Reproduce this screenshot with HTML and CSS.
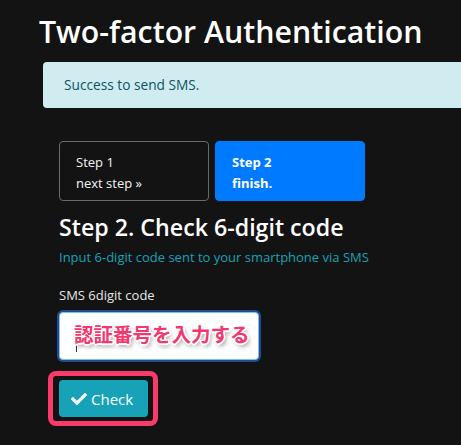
FILE: index.html
```html
<!DOCTYPE html>
<html lang="ja">
<head>
<meta charset="utf-8">
<title>Two-factor Authentication</title>
<link rel="stylesheet" href="styles.css">
</head>
<body>
<div class="page">
  <h1 class="title">Two-factor Authentication</h1>
  <div class="alert">Success to send SMS.</div>
  <div class="content">
    <div class="steps">
      <div class="step">
        <div>Step 1</div>
        <div>next step &raquo;</div>
      </div>
      <div class="step step-active">
        <div>Step 2</div>
        <div>finish.</div>
      </div>
    </div>
    <h2 class="heading">Step 2. Check 6-digit code</h2>
    <p class="hint">Input 6-digit code sent to your smartphone via SMS</p>
    <label class="label" for="code">SMS 6digit code</label>
    <div class="field">
      <input id="code" class="input" type="text">
      <span class="caret"></span>
      <span class="note">認証番号を入力する</span>
    </div>
    <div class="highlight">
      <button class="btn" type="button">
        <svg class="check" viewBox="0 0 512 512" width="16" height="16" aria-hidden="true"><path fill="#fff" d="M173.9 439.4l-166.4-166.4c-10-10-10-26.2 0-36.2l36.2-36.2c10-10 26.2-10 36.2 0L192 312.7 432.1 72.6c10-10 26.2-10 36.2 0l36.2 36.2c10 10 10 26.2 0 36.2L210.1 439.4c-10 10-26.2 10-36.2 0z"/></svg>
        <span>Check</span>
      </button>
    </div>
  </div>
</div>
</body>
</html>
```
FILE: styles.css
```css
html, body {
  margin: 0;
  padding: 0;
  background: #131313;
}
body {
  font-family: "Open Sans", "Noto Sans", "Noto Sans CJK JP", sans-serif;
  color: #f2f2f2;
  overflow: hidden;
}
.page {
  width: 461px;
  height: 445px;
}
.title {
  margin: 0;
  padding: 12px 0 0 39px;
  font-size: 30.3px;
  line-height: 40px;
  font-weight: 600;
  color: #ffffff;
  white-space: nowrap;
}
.alert {
  margin: 10px 0 0 43px;
  height: 46px;
  line-height: 46px;
  padding: 0 21px;
  background: #d1ecf1;
  color: #0c5460;
  font-size: 13.7px;
  border-radius: 4px 0 0 4px;
}
.content {
  padding-left: 59px;
}
.steps {
  display: flex;
  gap: 6px;
  margin-top: 33px;
}
.step {
  box-sizing: border-box;
  width: 150px;
  height: 60px;
  padding: 10px 16px 8px;
  border: 1px solid #6a6a6a;
  border-radius: 4px;
  font-size: 13px;
  line-height: 21px;
  color: #f4f4f4;
}
.step-active {
  background: #007bff;
  border-color: #007bff;
  color: #ffffff;
  font-weight: 700;
}
.heading {
  margin: 11px 0 0;
  font-size: 23.2px;
  line-height: 30px;
  font-weight: 600;
  color: #ffffff;
  white-space: nowrap;
}
.hint {
  margin: 5px 0 0;
  font-size: 13px;
  line-height: 20px;
  color: #17a2b8;
  white-space: nowrap;
}
.label {
  display: block;
  margin-top: 18px;
  font-size: 13px;
  line-height: 20px;
  color: #e6e6e6;
}
.field {
  position: relative;
  width: 200px;
  height: 48px;
  margin-top: 7px;
}
.input {
  box-sizing: border-box;
  width: 200px;
  height: 48px;
  margin: 0;
  border: 1px solid #80bdff;
  border-radius: 4px;
  background: #ffffff;
  box-shadow: 0 0 0 2px #1f4f8a;
  outline: none;
}
.caret {
  position: absolute;
  left: 17px;
  top: 32px;
  width: 1px;
  height: 8px;
  background: #333;
}
.note {
  position: absolute;
  left: 15px;
  top: 9px;
  font-family: "Noto Sans CJK JP", sans-serif;
  font-weight: 700;
  font-size: 19.5px;
  line-height: 26px;
  color: #f2386f;
  white-space: nowrap;
  text-shadow:
    1.5px 0 0 #fff, -1.5px 0 0 #fff, 0 1.5px 0 #fff, 0 -1.5px 0 #fff,
    1px 1px 0 #fff, -1px -1px 0 #fff, 1px -1px 0 #fff, -1px 1px 0 #fff,
    2px 3px 4px rgba(0, 0, 0, 0.45);
}
.highlight {
  display: inline-flex;
  margin: 11px 0 0 -11px;
  padding: 4px 5px 4px 6px;
  border: 5px solid #fb3a6c;
  border-radius: 8px;
}
.btn {
  display: inline-flex;
  align-items: center;
  gap: 4px;
  box-sizing: border-box;
  width: 89px;
  height: 37px;
  padding: 0 0 0 12px;
  border: none;
  border-radius: 4px;
  background: #17a2b8;
  color: #ffffff;
  font-family: "Open Sans", "Noto Sans", sans-serif;
  font-size: 15px;
}
.check {
  display: block;
}
```
